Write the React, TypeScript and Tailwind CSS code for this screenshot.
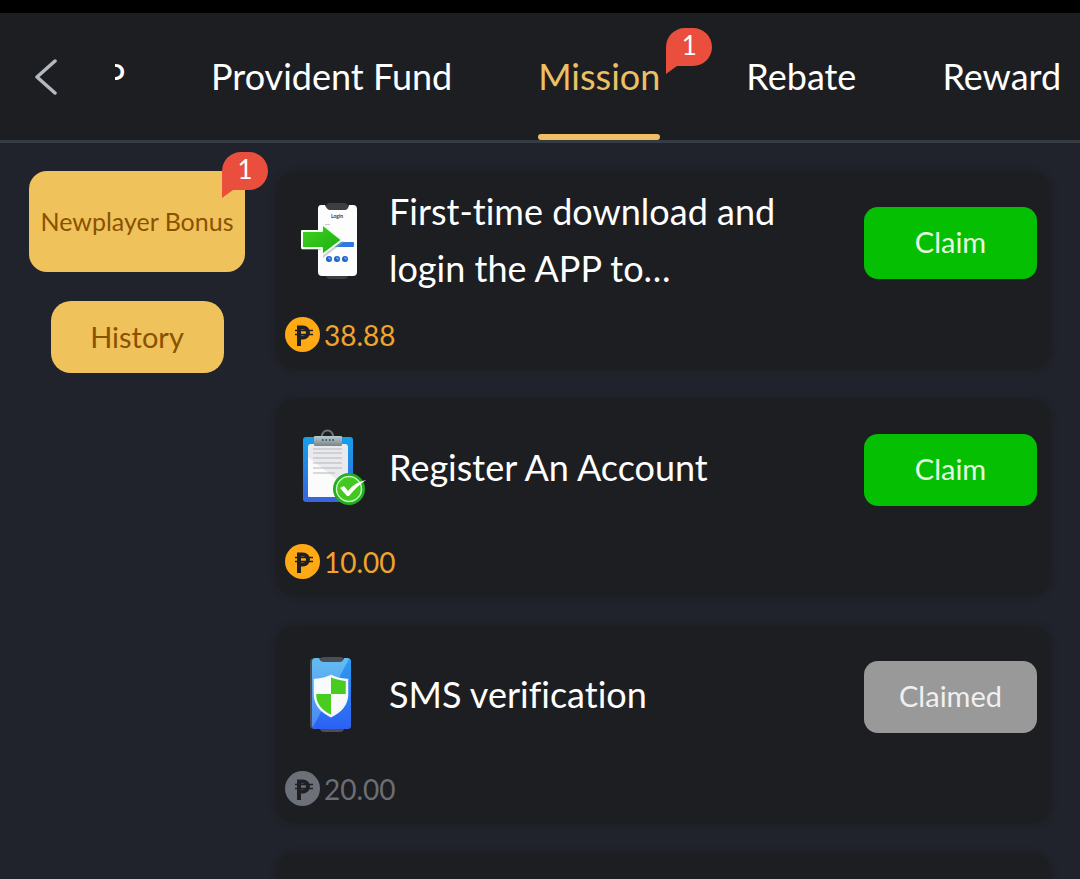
import React from "react";

function Badge({ count }: { count: number }) {
  return (
    <span className="pointer-events-none relative flex h-[46px] w-[46px] justify-center">
      <svg viewBox="0 0 46 46" className="absolute inset-0 h-full w-full" aria-hidden="true">
        <path d="M0 46V19A19 19 0 0 1 19 0H27A19 19 0 0 1 27 38H11Z" fill="#ea4f3d" />
      </svg>
      <span className="relative text-[26px] leading-[34px] text-white">{count}</span>
    </span>
  );
}

function LoginPhoneIcon() {
  return (
    <svg viewBox="0 0 86 86" className="h-[86px] w-[86px]" aria-hidden="true">
      <defs>
        <linearGradient id="arrow" x1="0" y1="0" x2="1" y2="1">
          <stop offset="0" stopColor="#45d321" />
          <stop offset="1" stopColor="#17ad12" />
        </linearGradient>
      </defs>
      <rect x="36" y="3" width="22" height="76" rx="4" fill="#3d3e42" />
      <path d="M31 5H35Q37 10 40 10H55Q58 10 59 5H63Q67 5 67 9V72Q67 76 63 76H32Q28 76 28 72V9Q28 5 31 5Z" fill="#fdfdfe" />
      <text x="47" y="18" textAnchor="middle" fontSize="5" fontWeight="700" fill="#33363c" fontFamily="Lato, sans-serif">Login</text>
      <rect x="35" y="24" width="5" height="1" fill="#c9cbd0" />
      <rect x="34" y="42" width="30" height="5" rx="1" fill="#2f78e0" />
      {[39, 47, 55].map((x) => (
        <g key={x}>
          <circle cx={x} cy="59" r="3" fill="#1763cf" />
          <path d={`M${x - 1} 58h2v2`} stroke="#8db8f4" strokeWidth="1" fill="none" />
        </g>
      ))}
      <path d="M11 32H32V24L53 41L32 57V49H11Z" fill="#9fa5a2" opacity=".5" transform="translate(1 1)" />
      <path d="M12 31H32V24L52 40L32 55V48H12Z" fill="url(#arrow)" stroke="#effff0" strokeWidth="2" strokeLinejoin="round" />
    </svg>
  );
}

function ClipboardIcon() {
  return (
    <svg viewBox="0 0 86 86" className="h-[86px] w-[86px]" aria-hidden="true">
      <defs>
        <linearGradient id="board" x1="0" y1="0" x2="0" y2="1">
          <stop offset="0" stopColor="#16a0ea" />
          <stop offset="1" stopColor="#3763dc" />
        </linearGradient>
        <linearGradient id="clip" x1="0" y1="0" x2="0" y2="1">
          <stop offset="0" stopColor="#b9c9ce" />
          <stop offset="1" stopColor="#77868b" />
        </linearGradient>
      </defs>
      <rect x="13" y="10" width="50" height="65" rx="3" fill="url(#board)" />
      <rect x="18" y="17" width="40" height="53" rx="3" fill="#e9eaee" />
      <path d="M18 30L58 61V70H18Z" fill="#fff" opacity=".8" />
      <path d="M23 22H52M23 26H52M23 31H52M23 36H52M23 41H52M23 46H45" stroke="#b6b7ba" strokeWidth="1" />
      <path d="M32 10V9A5.5 5.5 0 0 1 43 9V10" fill="none" stroke="#6b7679" strokeWidth="2" />
      <rect x="24" y="9" width="28" height="10" rx="1" fill="url(#clip)" />
      <path d="M32 13H44" stroke="#4d5b60" strokeWidth="2" strokeDasharray="1.5 2" />
      <circle cx="59" cy="62" r="16" fill="#22ad22" />
      <circle cx="59" cy="62" r="12.5" fill="#42c91f" stroke="#c6f4bd" strokeWidth="1.5" />
      <path d="M50 61L54 59L58 64Q65 55 76 53Q67 59 59 69H57Z" fill="#fff" />
    </svg>
  );
}

function ShieldPhoneIcon() {
  return (
    <svg viewBox="0 0 86 86" className="h-[86px] w-[86px]" aria-hidden="true">
      <defs>
        <linearGradient id="screen" x1="0" y1="0" x2="0" y2="1">
          <stop offset="0" stopColor="#64bdf0" />
          <stop offset="1" stopColor="#4a86f2" />
        </linearGradient>
        <linearGradient id="glare" x1="0" y1="0" x2="0" y2="1">
          <stop offset="0" stopColor="#2d9cf0" />
          <stop offset="1" stopColor="#2c60f5" />
        </linearGradient>
        <clipPath id="shield">
          <path d="M25 26Q35 25 41 22Q47 25 57 26V42Q56 55 41 62Q26 55 25 42Z" />
        </clipPath>
      </defs>
      <rect x="20" y="4" width="20" height="71" rx="4" fill="#4b4e55" />
      <rect x="30" y="3" width="24" height="75" rx="4" fill="#4b4e55" />
      <path d="M26 4H29Q30 8 34 8H50Q53 8 54 4H57Q61 4 61 8V71Q61 75 57 75H26Q22 75 22 71V8Q22 4 26 4Z" fill="url(#screen)" />
      <path d="M59 5Q61 6 61 8V71Q61 75 57 75H26Q24 75 23 73Z" fill="url(#glare)" />
      <g clipPath="url(#shield)">
        <rect x="24" y="20" width="34" height="43" fill="#f8fbf9" />
        <rect x="41" y="20" width="17" height="20" fill="#48cc20" />
        <rect x="24" y="40" width="17" height="23" fill="#48cc20" />
      </g>
      <path d="M25 26Q35 25 41 22Q47 25 57 26V42Q56 55 41 62Q26 55 25 42Z" fill="none" stroke="#f2f8ff" strokeWidth="2.5" />
    </svg>
  );
}

function PesoCoin({ muted }: { muted: boolean }) {
  return (
    <svg viewBox="0 0 35 35" className="h-[35px] w-[35px]" aria-hidden="true">
      <circle cx="17.5" cy="17.5" r="17.5" fill={muted ? "#6b7079" : "#ffa914"} />
      <g fill="none" stroke="#1f2023">
        <path d="M14 29V10.500H18A5 5 0 0 1 18 20.500H14" strokeWidth="4" />
        <path d="M10 13.500H28M10 17.500H28" strokeWidth="1.500" />
      </g>
    </svg>
  );
}

type Mission = { title: string; reward: string; claimed: boolean; icon: React.ReactNode };

const missions: Mission[] = [
  { title: "First-time download and login the APP to…", reward: "38.88", claimed: false, icon: <LoginPhoneIcon /> },
  { title: "Register An Account", reward: "10.00", claimed: false, icon: <ClipboardIcon /> },
  { title: "SMS verification", reward: "20.00", claimed: true, icon: <ShieldPhoneIcon /> },
];

function MissionCard({ mission }: { mission: Mission }) {
  const { title, reward, claimed, icon } = mission;
  return (
    <li className="rounded-[20px] bg-[#1d1e21] pt-[11px] pr-[14px] pb-[17px] pl-[9px] shadow-[0_0_6px_#1d1e21]">
      <div className="flex min-h-[120px] items-center">
        <div className="mr-[13px] ml-[5px] shrink-0">{icon}</div>
        <h2 className="min-w-0 flex-1 pr-[60px] pb-[6px] text-[36px] leading-[57px] text-white">{title}</h2>
        <button
          type="button"
          disabled={claimed}
          className={
            claimed
              ? "h-[72px] w-[173px] shrink-0 rounded-[14px] bg-[#999999] pb-[2px] text-[29px] text-[#f0f0f0]"
              : "h-[72px] w-[173px] shrink-0 rounded-[14px] bg-[#05bf03] pb-[2px] text-[29px] text-[#e4fbe0]"
          }
        >
          {claimed ? "Claimed" : "Claim"}
        </button>
      </div>
      <div
        className={
          claimed
            ? "mt-[14px] flex h-[35px] items-center gap-1 text-[28px] text-[#6b6e74]"
            : "mt-[14px] flex h-[35px] items-center gap-1 text-[28px] text-[#f0a42c]"
        }
      >
        <PesoCoin muted={claimed} />
        <span>{reward}</span>
      </div>
    </li>
  );
}

const tabs = ["Provident Fund", "Mission", "Rebate", "Reward"];

export default function App() {
  return (
    <div className="flex h-screen flex-col overflow-hidden bg-[#20232b] font-['Lato','Noto_Sans',sans-serif] [font-variant-ligatures:none]">
      <div className="h-[13px] shrink-0 bg-black" />
      <header className="flex h-[130px] shrink-0 items-stretch border-b-[3px] border-[#363a42] bg-[#1d1e22]">
        <button type="button" aria-label="Back" className="flex w-[115px] shrink-0 items-center pl-[34px]">
          <svg viewBox="0 0 24 36" className="h-9 w-6" aria-hidden="true">
            <path d="M21 2L3 18L21 34" fill="none" stroke="#b3b8c1" strokeWidth="3.500" strokeLinecap="round" strokeLinejoin="round" />
          </svg>
        </button>
        <nav className="flex min-w-0 flex-1 gap-[86px] text-[36px] whitespace-nowrap text-white">
          <button type="button" className="flex w-[10px] shrink-0 items-center justify-end overflow-hidden pb-[2px]">
            P
          </button>
          {tabs.map((tab) => {
            const active = tab === "Mission";
            return (
              <button
                key={tab}
                type="button"
                aria-current={active ? "page" : undefined}
                className={
                  active
                    ? "relative shrink-0 border-b-[6px] border-transparent pt-[4px] text-[#ecc063]"
                    : "shrink-0 pb-[2px]"
                }
              >
                {tab}
                {active && (
                  <>
                    <span className="absolute inset-x-0 -bottom-[6px] h-[6px] rounded-full bg-[#eec063]" />
                    <span className="absolute top-[15px] left-full ml-[6px]">
                      <Badge count={1} />
                    </span>
                  </>
                )}
              </button>
            );
          })}
        </nav>
      </header>
      <main className="flex min-h-0 flex-1 gap-[31px] px-[29px] pt-[28px]">
        <aside className="flex w-[216px] shrink-0 flex-col items-center gap-[29px] text-[#8a5200]">
          <button type="button" className="relative h-[101px] w-full rounded-[18px] bg-[#f0c25b] text-[25px] whitespace-nowrap">
            Newplayer Bonus
            <span className="absolute -top-[19px] -right-[23px]">
              <Badge count={1} />
            </span>
          </button>
          <button type="button" className="h-[72px] w-[173px] rounded-[20px] bg-[#f0c25b] text-[29px]">
            History
          </button>
        </aside>
        <ul className="flex min-w-0 flex-1 flex-col gap-[30px] pt-px">
          {missions.map((mission) => (
            <MissionCard key={mission.title} mission={mission} />
          ))}
          <li className="h-[197px] shrink-0 rounded-[20px] bg-[#1d1e21] shadow-[0_0_6px_#1d1e21]" />
        </ul>
      </main>
    </div>
  );
}
